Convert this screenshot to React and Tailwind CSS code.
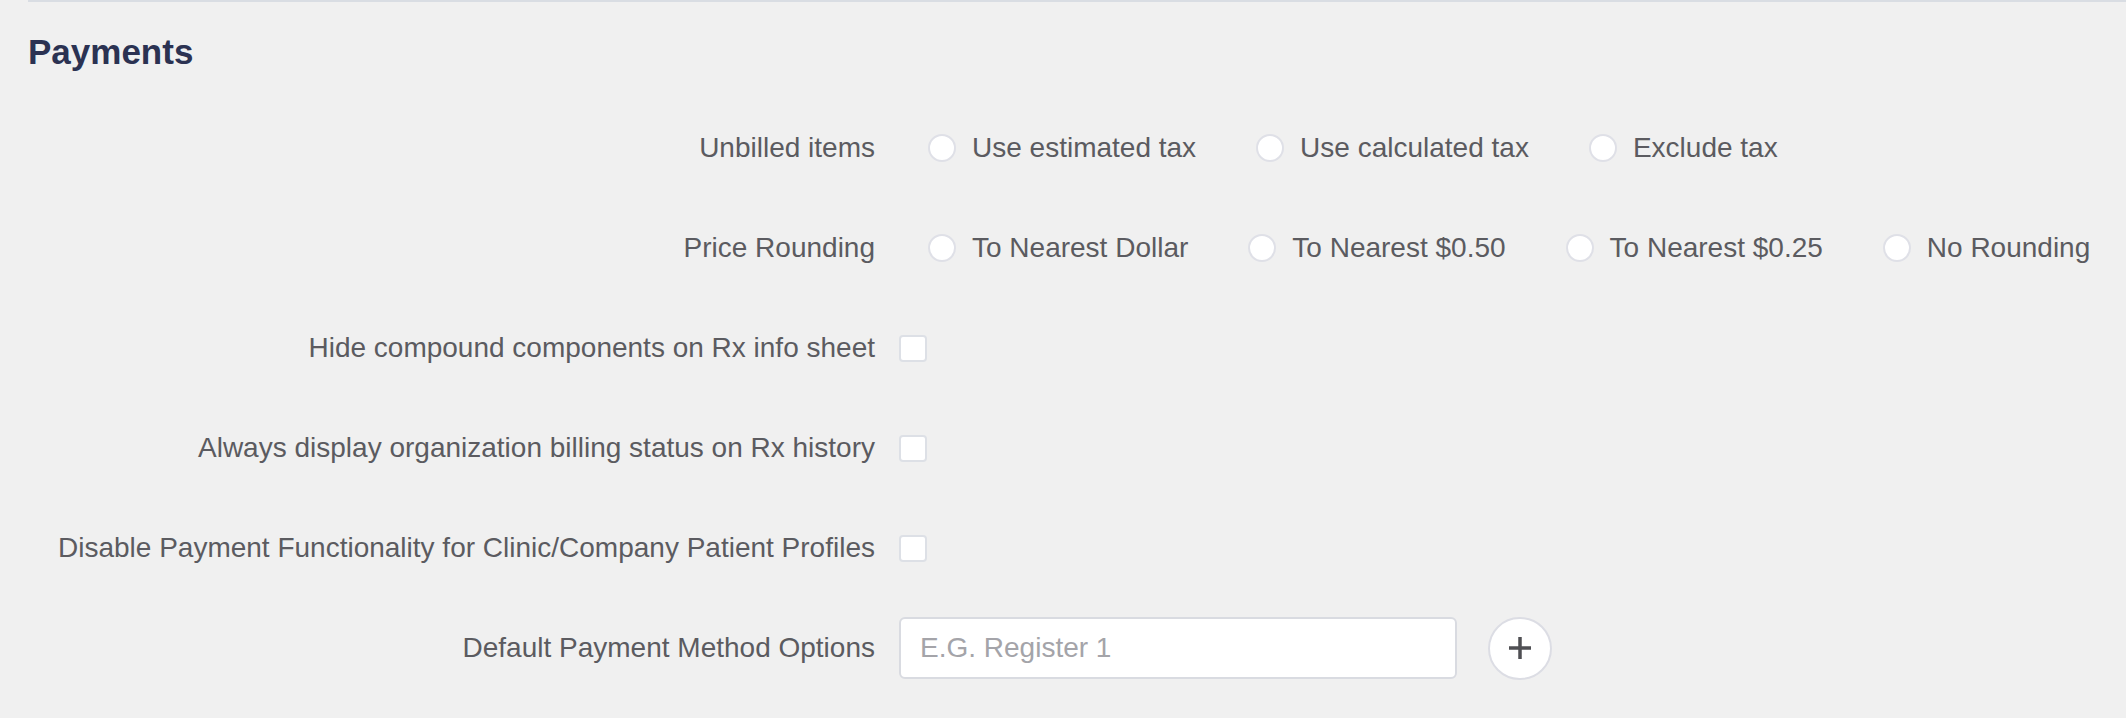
import React, { useState } from "react";

const unbilledOptions = ["Use estimated tax", "Use calculated tax", "Exclude tax"];
const roundingOptions = [
  "To Nearest Dollar",
  "To Nearest $0.50",
  "To Nearest $0.25",
  "No Rounding",
];

const SettingRow = ({ label, children }) => (
  <div className="flex items-center h-[100px]">
    <label className="w-[847px] shrink-0 text-right">{label}</label>
    <div className="ml-[24px] flex items-center">{children}</div>
  </div>
);

const RadioGroup = ({ name, options, value, onChange }) => (
  <div className="flex items-center gap-[60px] pl-[29px]">
    {options.map((opt) => (
      <label key={opt} className="flex items-center gap-[16px] cursor-pointer">
        <input
          type="radio"
          name={name}
          checked={value === opt}
          onChange={() => onChange(opt)}
          className="sr-only"
        />
        <span className="w-[28px] h-[28px] rounded-full border-2 border-[#dfe0e7] bg-white flex items-center justify-center">
          {value === opt && (
            <span className="w-[12px] h-[12px] rounded-full bg-[#2b3252]" />
          )}
        </span>
        <span>{opt}</span>
      </label>
    ))}
  </div>
);

const Checkbox = ({ checked, onChange }) => (
  <button
    type="button"
    onClick={() => onChange(!checked)}
    className="w-[28px] h-[27px] rounded-[4px] border-2 border-[#dde0e6] bg-white flex items-center justify-center"
  >
    {checked && (
      <svg width="16" height="16" viewBox="0 0 16 16" fill="none">
        <path d="M3 8l3 3 7-7" stroke="#2b3252" strokeWidth="2.5" />
      </svg>
    )}
  </button>
);

const App = () => {
  const [unbilled, setUnbilled] = useState("");
  const [rounding, setRounding] = useState("");
  const [hideCompound, setHideCompound] = useState(false);
  const [alwaysBilling, setAlwaysBilling] = useState(false);
  const [disablePayment, setDisablePayment] = useState(false);
  const [method, setMethod] = useState("");

  return (
    <div className="min-h-screen bg-[#f0f0f0] font-['Liberation_Sans',Arial,sans-serif] text-[28px] text-[#5b5b60]">
      <div className="ml-[28px]">
        <div className="border-t-2 border-[#d9dde3]" />
        <h2 className="pt-[30px] h-[96px] text-[35px] leading-[40px] font-bold text-[#2b3252]">
          Payments
        </h2>

        <SettingRow label="Unbilled items">
          <RadioGroup
            name="unbilled"
            options={unbilledOptions}
            value={unbilled}
            onChange={setUnbilled}
          />
        </SettingRow>

        <SettingRow label="Price Rounding">
          <RadioGroup
            name="rounding"
            options={roundingOptions}
            value={rounding}
            onChange={setRounding}
          />
        </SettingRow>

        <SettingRow label="Hide compound components on Rx info sheet">
          <Checkbox checked={hideCompound} onChange={setHideCompound} />
        </SettingRow>

        <SettingRow label="Always display organization billing status on Rx history">
          <Checkbox checked={alwaysBilling} onChange={setAlwaysBilling} />
        </SettingRow>

        <SettingRow label="Disable Payment Functionality for Clinic/Company Patient Profiles">
          <Checkbox checked={disablePayment} onChange={setDisablePayment} />
        </SettingRow>

        <SettingRow label="Default Payment Method Options">
          <input
            type="text"
            value={method}
            onChange={(e) => setMethod(e.target.value)}
            placeholder="E.G. Register 1"
            className="w-[558px] h-[62px] rounded-[6px] border-2 border-[#d9dbe1] bg-white px-[19px] outline-none placeholder:text-[#a4a4a9]"
          />
          <button
            type="button"
            className="ml-[31px] w-[64px] h-[63px] rounded-full border-2 border-[#dcdde4] bg-white flex items-center justify-center"
          >
            <svg width="24" height="24" viewBox="0 0 24 24" fill="none">
              <path d="M12 1v22M1 12h22" stroke="#4f4f53" strokeWidth="3.5" />
            </svg>
          </button>
        </SettingRow>
      </div>
    </div>
  );
};

export default App;
